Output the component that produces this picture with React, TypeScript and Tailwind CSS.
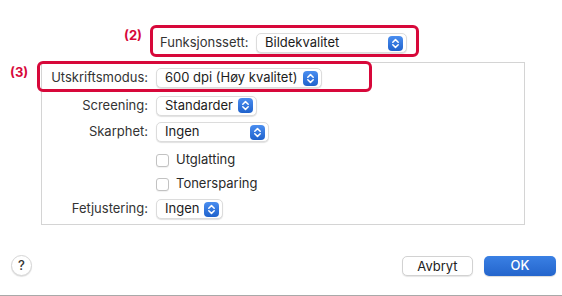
import React from 'react'

const Stepper = () => (
  <span className="flex h-[15px] w-[15px] items-center justify-center rounded-[4px] bg-gradient-to-b from-[#4a8ef0] to-[#1f62cc]">
    <svg width="15" height="15" viewBox="0 0 15 15" fill="none">
      <polyline points="4.8,6.2 7.5,3.6 10.2,6.2" stroke="white" strokeWidth="1.5" strokeLinecap="round" strokeLinejoin="round" />
      <polyline points="4.8,8.8 7.5,11.4 10.2,8.8" stroke="white" strokeWidth="1.5" strokeLinecap="round" strokeLinejoin="round" />
    </svg>
  </span>
)

const Popup = ({ value, w }: { value: string; w: string }) => (
  <div
    className={`${w} flex h-[20px] items-center justify-between rounded-[5px] border border-[#dcdcdc] bg-white pl-[8px] pr-[3px] text-[13px] text-[#1c1c1c] shadow-[0_1px_1px_rgba(0,0,0,0.12)]`}
  >
    <span>{value}</span>
    <Stepper />
  </div>
)

const Row = ({ label, h, children }: { label?: string; h: string; children: React.ReactNode }) => (
  <div className={`flex ${h} items-center`}>
    <div className="w-[107px] pr-px text-right text-[13px] text-[#333]">{label}</div>
    <div className="ml-[7px] flex items-center">{children}</div>
  </div>
)

const Check = ({ label }: { label: string }) => (
  <label className="flex items-center gap-[7px] text-[13px] text-[#2a2a2a]">
    <span className="h-[13px] w-[13px] rounded-[3px] border border-[#c2c2c2] bg-white shadow-[0_1px_1px_rgba(0,0,0,0.06)]" />
    {label}
  </label>
)

export default function App() {
  return (
    <div
      className="flex h-[296px] w-[562px] flex-col border-b border-[#a9a9a9] bg-white pt-[25px]"
      style={{ fontFamily: 'Inter, Roboto, sans-serif' }}
    >
      {/* (2) */}
      <div className="flex h-[32px] items-start pl-[124px]">
        <span className="mt-[1px] w-[26px] text-[13px] font-bold text-[#d7083a]">(2)</span>
        <div className="flex h-[32px] w-[269px] items-center rounded-[6px] border-[3px] border-[#d7083a] pl-[7px] pt-[4px]">
          <span className="w-[96px] text-[13px] text-[#333]">Funksjonssett:</span>
          <Popup value="Bildekvalitet" w="w-[151px]" />
        </div>
      </div>

      {/* (3) + panel */}
      <div className="mt-[5px] flex pl-[10px]">
        <span className="mt-[1px] w-[31px] text-[13px] font-bold text-[#d7083a]">(3)</span>
        <div className="relative flex w-[484px] flex-col border border-[#d4d4d4]">
          <Row label="Utskriftsmodus:" h="h-[30px]">
            <Popup value="600 dpi (Høy kvalitet)" w="w-[166px]" />
          </Row>
          <Row label="Screening:" h="h-[25px]">
            <Popup value="Standarder" w="w-[101px]" />
          </Row>
          <Row label="Skarphet:" h="h-[28px]">
            <Popup value="Ingen" w="w-[113px]" />
          </Row>
          <Row h="h-[28px]">
            <Check label="Utglatting" />
          </Row>
          <Row h="h-[20px]">
            <Check label="Tonersparing" />
          </Row>
          <Row label="Fetjustering:" h="h-[30px]">
            <Popup value="Ingen" w="w-[67px]" />
          </Row>
          <div className="pointer-events-none absolute left-[-5px] top-[-2px] h-[31px] w-[335px] rounded-[6px] border-[3px] border-[#d7083a]" />
        </div>
      </div>

      {/* footer */}
      <div className="mt-[30px] flex items-center justify-between pl-[11px] pr-[6px]">
        <button className="flex h-[21px] w-[21px] items-center justify-center rounded-full border border-[#d6d6d6] bg-white text-[13px] font-medium text-[#333] shadow-[0_1px_1px_rgba(0,0,0,0.12)]">
          ?
        </button>
        <div className="flex gap-[11px]">
          <button className="h-[20px] w-[71px] rounded-[5px] border border-[#d2d2d2] bg-white text-[13px] text-[#222] shadow-[0_1px_1px_rgba(0,0,0,0.1)]">
            Avbryt
          </button>
          <button className="h-[20px] w-[72px] rounded-[5px] bg-gradient-to-b from-[#3a80e4] to-[#2465cc] text-[13px] font-medium text-white shadow-[0_1px_1px_rgba(0,0,0,0.15)]">
            OK
          </button>
        </div>
      </div>
    </div>
  )
}
